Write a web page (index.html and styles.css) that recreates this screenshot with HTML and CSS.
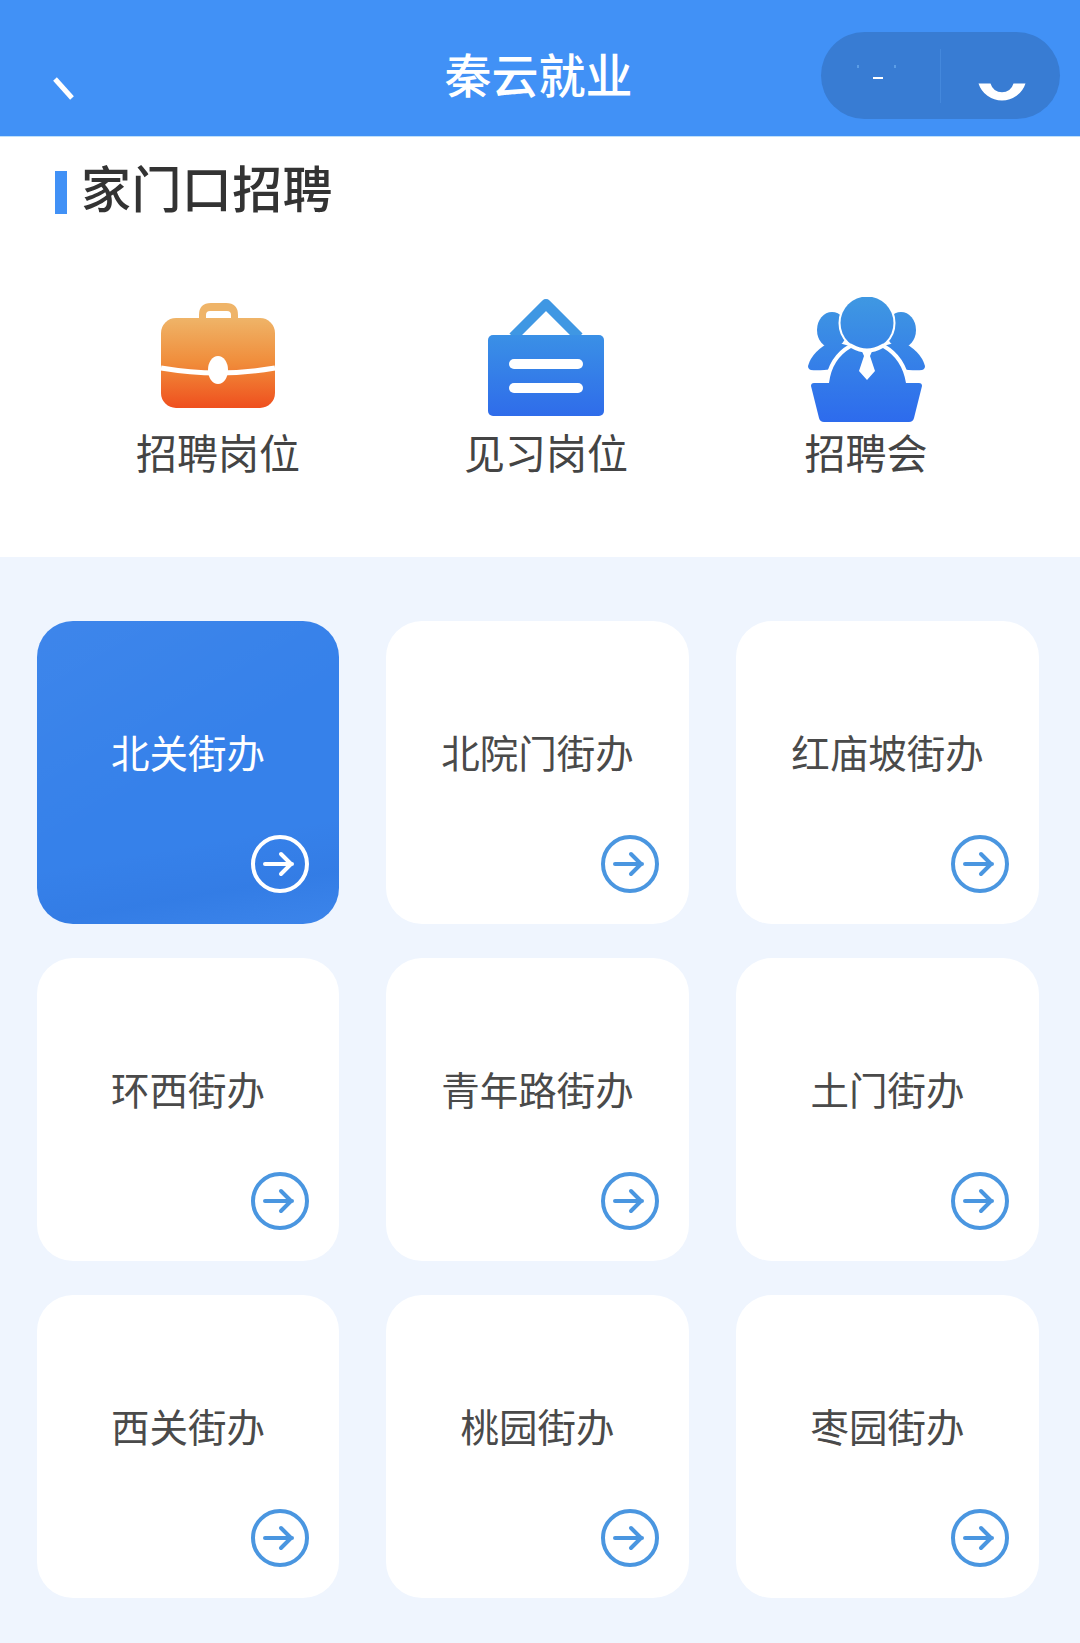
FILE: index.html
```html
<!DOCTYPE html>
<html lang="zh">
<head>
    <meta charset="UTF-8">
    <meta name="viewport" content="width=device-width, initial-scale=1.0">
    <title>秦云就业</title>
    <link rel="stylesheet" href="styles.css">
</head>
<body>
    <!-- 顶部导航 -->
    <header class="top-bar">
        <svg class="back-icon" width="40" height="70" viewBox="0 0 40 70">
            <path d="M20 47 L37 66" fill="none" stroke="#fff" stroke-width="5"/>
        </svg>
        <h1 class="top-title">秦云就业</h1>
        <div class="capsule">
            <div class="capsule-part capsule-left">
                <svg width="60" height="50" viewBox="0 0 60 50">
                    <path d="M22 27 H32" fill="none" stroke="#fff" stroke-width="2"/>
                    <path d="M7 14 v3 M44 14 v3" fill="none" stroke="#5b9de6" stroke-width="2"/>
                </svg>
            </div>
            <div class="capsule-part">
                <svg width="60" height="50" viewBox="0 0 60 50">
                    <path d="M7.500 32.500 A24.700 24.700 0 0 0 54.500 32.500 L42.500 32.500 A11.900 11.900 0 0 1 19.500 32.500 Z" fill="#fff"/>
                </svg>
            </div>
        </div>
    </header>

    <!-- 家门口招聘 -->
    <section class="entry-section">
        <h2 class="section-title">家门口招聘</h2>
        <div class="entry-row">
            <a class="entry-item">
                <svg class="entry-icon" viewBox="0 0 130 126">
                    <defs>
                        <linearGradient id="bagFill" x1="0" y1="0" x2="0" y2="1">
                            <stop offset="0" stop-color="#efb468"/>
                            <stop offset="0.5" stop-color="#f08c3a"/>
                            <stop offset="1" stop-color="#ef4f1e"/>
                        </linearGradient>
                    </defs>
                    <g transform="translate(8 6)">
                        <path d="M38 17 V12 Q38 0 50 0 H65 Q77 0 77 12 V17 H70 V12 Q70 8 66 8 H49 Q45 8 45 12 V17 Z" fill="#efb468"/>
                        <rect x="0" y="15" width="114" height="90" rx="15" fill="url(#bagFill)"/>
                        <path d="M0 65 Q30 70 57 70 Q84 70 114 65" fill="none" stroke="#fff" stroke-width="5"/>
                        <ellipse cx="57" cy="67" rx="10" ry="14" fill="#fff"/>
                    </g>
                </svg>
                <span class="entry-name">招聘岗位</span>
            </a>
            <a class="entry-item">
                <svg class="entry-icon" viewBox="0 0 130 126">
                    <defs>
                        <linearGradient id="signFill" x1="0" y1="0" x2="0" y2="1">
                            <stop offset="0" stop-color="#3a90e6"/>
                            <stop offset="1" stop-color="#2f6cea"/>
                        </linearGradient>
                    </defs>
                    <g transform="translate(7 2)">
                        <path d="M25 38 L58 5 L91 38" fill="none" stroke="#3f97e3" stroke-width="10" stroke-linejoin="round"/>
                        <rect x="0" y="36" width="116" height="81" rx="5" fill="url(#signFill)"/>
                        <rect x="21" y="60" width="74" height="10" rx="5" fill="#fff"/>
                        <rect x="21" y="84" width="74" height="10" rx="5" fill="#fff"/>
                    </g>
                </svg>
                <span class="entry-name">见习岗位</span>
            </a>
            <a class="entry-item">
                <svg class="entry-icon" viewBox="0 0 130 126">
                    <defs>
                        <linearGradient id="crowdFill" gradientUnits="userSpaceOnUse" x1="0" y1="0" x2="0" y2="125">
                            <stop offset="0" stop-color="#3f98e2"/>
                            <stop offset="1" stop-color="#2d6bed"/>
                        </linearGradient>
                    </defs>
                    <g transform="translate(7 0)">
                        <ellipse cx="24" cy="33" rx="15" ry="18" fill="url(#crowdFill)"/>
                        <ellipse cx="93" cy="33" rx="15" ry="18" fill="url(#crowdFill)"/>
                        <path d="M0 69 Q4 54 24 44 L45 50 L26 72 Q10 74 3 73 Q0 72 0 69 Z" fill="url(#crowdFill)"/>
                        <path d="M117 69 Q113 54 93 44 L72 50 L91 72 Q107 74 114 73 Q117 72 117 69 Z" fill="url(#crowdFill)"/>
                        <circle cx="59" cy="26" r="26.500" fill="url(#crowdFill)" stroke="#fff" stroke-width="4" paint-order="stroke"/>
                        <path d="M21 86 Q24 62 43 51 Q59 60 75 51 Q94 62 98 86 Z" fill="url(#crowdFill)" stroke="#fff" stroke-width="8" paint-order="stroke"/>
                        <path d="M3 89 Q3 86 6 86 H111 Q114 86 114 89 L106 121 Q105 125 101 125 H16 Q12 125 11 121 Z" fill="url(#crowdFill)"/>
                        <path d="M53 52 H65 L62 59 L67 74 L59 83 L51 74 L56 59 Z" fill="#fff"/>
                    </g>
                </svg>
                <span class="entry-name">招聘会</span>
            </a>
        </div>
    </section>

    <!-- 街办列表 -->
    <main class="office-grid">
        <a class="office-card active">
            <span class="office-name">北关街办</span>
            <svg class="go-icon" viewBox="0 0 58 58"><circle cx="29" cy="29" r="27"/><path d="M14 29 H41 M30 19 L40 29 L30 39"/></svg>
        </a>
        <a class="office-card">
            <span class="office-name">北院门街办</span>
            <svg class="go-icon" viewBox="0 0 58 58"><circle cx="29" cy="29" r="27"/><path d="M14 29 H41 M30 19 L40 29 L30 39"/></svg>
        </a>
        <a class="office-card">
            <span class="office-name">红庙坡街办</span>
            <svg class="go-icon" viewBox="0 0 58 58"><circle cx="29" cy="29" r="27"/><path d="M14 29 H41 M30 19 L40 29 L30 39"/></svg>
        </a>
        <a class="office-card">
            <span class="office-name">环西街办</span>
            <svg class="go-icon" viewBox="0 0 58 58"><circle cx="29" cy="29" r="27"/><path d="M14 29 H41 M30 19 L40 29 L30 39"/></svg>
        </a>
        <a class="office-card">
            <span class="office-name">青年路街办</span>
            <svg class="go-icon" viewBox="0 0 58 58"><circle cx="29" cy="29" r="27"/><path d="M14 29 H41 M30 19 L40 29 L30 39"/></svg>
        </a>
        <a class="office-card">
            <span class="office-name">土门街办</span>
            <svg class="go-icon" viewBox="0 0 58 58"><circle cx="29" cy="29" r="27"/><path d="M14 29 H41 M30 19 L40 29 L30 39"/></svg>
        </a>
        <a class="office-card">
            <span class="office-name">西关街办</span>
            <svg class="go-icon" viewBox="0 0 58 58"><circle cx="29" cy="29" r="27"/><path d="M14 29 H41 M30 19 L40 29 L30 39"/></svg>
        </a>
        <a class="office-card">
            <span class="office-name">桃园街办</span>
            <svg class="go-icon" viewBox="0 0 58 58"><circle cx="29" cy="29" r="27"/><path d="M14 29 H41 M30 19 L40 29 L30 39"/></svg>
        </a>
        <a class="office-card">
            <span class="office-name">枣园街办</span>
            <svg class="go-icon" viewBox="0 0 58 58"><circle cx="29" cy="29" r="27"/><path d="M14 29 H41 M30 19 L40 29 L30 39"/></svg>
        </a>
    </main>
</body>
</html>
```
FILE: styles.css
```css
/* 全局样式 */
* {
    margin: 0;
    padding: 0;
    box-sizing: border-box;
    font-family: "Noto Sans CJK SC", "Noto Sans", sans-serif;
}

body {
    background: #eff5fe;
    color: #444444;
    width: 1080px;
    min-height: 1643px;
    overflow: hidden;
}

/* 顶部导航 */
.top-bar {
    display: grid;
    grid-template-columns: 1fr auto 1fr;
    align-items: start;
    height: 137px;
    padding: 0 20px 0 17px;
    background: #4191f6;
    border-bottom: 1px solid #bfe0fa;
}

.back-icon {
    display: block;
    margin-top: 32px;
    margin-left: 18px;
}

.top-title {
    margin-top: 43px;
    font-size: 47px;
    line-height: 60px;
    font-weight: 500;
    color: #ffffff;
}

.capsule {
    justify-self: end;
    display: flex;
    align-items: center;
    width: 239px;
    height: 87px;
    margin-top: 32px;
    border-radius: 44px;
    background: #387cd3;
}

.capsule-part {
    flex: 1;
    display: flex;
    justify-content: center;
    align-items: center;
}

.capsule-left {
    height: 54px;
    border-right: 1px solid #4488dc;
}

/* 家门口招聘 */
.entry-section {
    height: 420px;
    padding-top: 24px;
    background: #ffffff;
}

.section-title {
    display: flex;
    margin-left: 55px;
    font-size: 50px;
    line-height: 50px;
    letter-spacing: 0.4px;
    font-weight: 500;
    color: #333333;
}

.section-title::before {
    content: '';
    width: 12px;
    height: 43px;
    margin: 10px 14px 0 0;
    background: #4191f6;
}

.entry-row {
    display: grid;
    grid-template-columns: 328px 320px 300px;
    margin: 83px 0 0 68px;
}

.entry-item {
    display: flex;
    flex-direction: column;
    align-items: center;
    width: 300px;
}

.entry-icon {
    display: block;
    width: 130px;
    height: 126px;
}

.entry-name {
    margin-top: 3px;
    font-size: 41px;
    line-height: 50px;
    color: #444444;
}

/* 街办列表 */
.office-grid {
    display: grid;
    grid-template-columns: 302px 303px 303px;
    grid-auto-rows: 303px;
    column-gap: 47px;
    row-gap: 34px;
    padding: 64px 0 0 37px;
}

.office-card {
    display: flex;
    flex-direction: column;
    padding: 108px 30px 31px;
    border-radius: 36px;
    background: #ffffff;
}

.office-name {
    text-align: center;
    margin: 0 -20px;
    font-size: 38.5px;
    line-height: 44px;
    color: #4a4a4a;
}

.go-icon {
    display: block;
    width: 58px;
    height: 58px;
    margin-top: auto;
    align-self: flex-end;
    fill: none;
    stroke: #4a96e0;
    stroke-width: 4;
    stroke-linecap: round;
    stroke-linejoin: round;
}

.office-card.active {
    background:
        linear-gradient(150deg, rgba(255, 255, 255, 0.04) 0%, rgba(255, 255, 255, 0) 50%),
        linear-gradient(170deg, rgba(0, 40, 140, 0) 70%, rgba(0, 40, 140, 0.05) 85%, rgba(255, 255, 255, 0.03) 100%),
        #3681ea;
}

.office-card.active .office-name {
    color: #ffffff;
}

.office-card.active .go-icon {
    stroke: #ffffff;
}
```
